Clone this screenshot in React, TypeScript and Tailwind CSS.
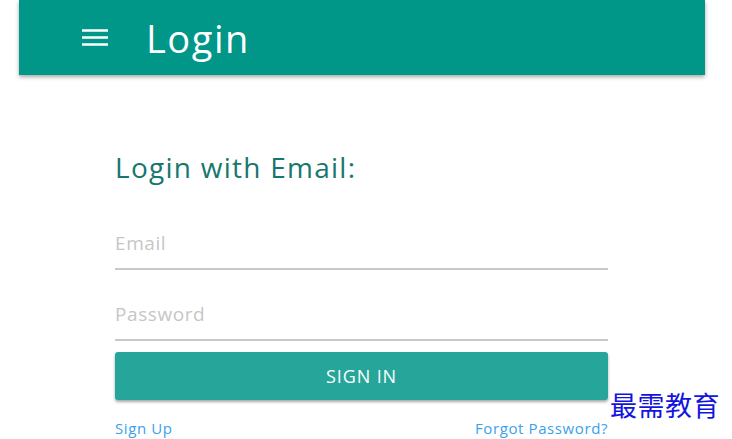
const App = () => {
  return (
    <main className="relative h-[439px] w-[732px] overflow-hidden bg-white" style={{ fontFamily: '"Open Sans", "Noto Sans", sans-serif' }}>
      <header className="ml-[19px] flex h-[75px] w-[686px] items-center bg-[#009688] pl-[63px] shadow-[0_2px_4px_rgba(0,0,0,0.35)]">
        <svg width="26" height="18" viewBox="0 0 26 18" className="shrink-0">
          <path d="M0 1.5h26M0 8.5h26M0 15.5h26" stroke="#fff" strokeWidth="2.6" />
        </svg>
        <h1 className="ml-[38px] text-[38px] leading-none tracking-[0.04em] text-white">Login</h1>
      </header>

      <section className="ml-[115px] w-[493px]">
        <h2 className="mt-[75px] text-[28px] leading-[34px] tracking-[0.045em] text-[#17776f]">Login with Email:</h2>

        <input
          type="email"
          placeholder="Email"
          className="mt-[33px] block h-[53px] w-full border-b-2 border-[#c9c9c9] bg-transparent text-[19px] tracking-[0.03em] text-gray-700 outline-none placeholder:text-[#c6c6c6]"
        />
        <input
          type="password"
          placeholder="Password"
          className="mt-[18px] block h-[53px] w-full border-b-2 border-[#c9c9c9] bg-transparent text-[19px] tracking-[0.03em] text-gray-700 outline-none placeholder:text-[#c6c6c6]"
        />

        <button
          type="button"
          className="mt-[11px] flex h-[48px] w-full items-center justify-center rounded-[3px] bg-[#26a69a] text-[18px] tracking-[0.05em] text-white shadow-[0_2px_3px_rgba(0,0,0,0.35)]"
        >
          SIGN IN
        </button>

        <div className="mt-[19px] flex justify-between text-[15px] leading-[18px] tracking-[0.04em] text-[#3a9ff0]">
          <a href="#">Sign Up</a>
          <a href="#">Forgot Password?</a>
        </div>
      </section>

      {/* watermark */}
      <div
        className="absolute left-[610px] top-[388px] text-[27px] leading-[34px] tracking-[0.5px] text-[#1414e0]"
        style={{ fontFamily: '"Noto Sans CJK SC", sans-serif' }}
      >
        最需教育
      </div>
    </main>
  );
};

export default App;
